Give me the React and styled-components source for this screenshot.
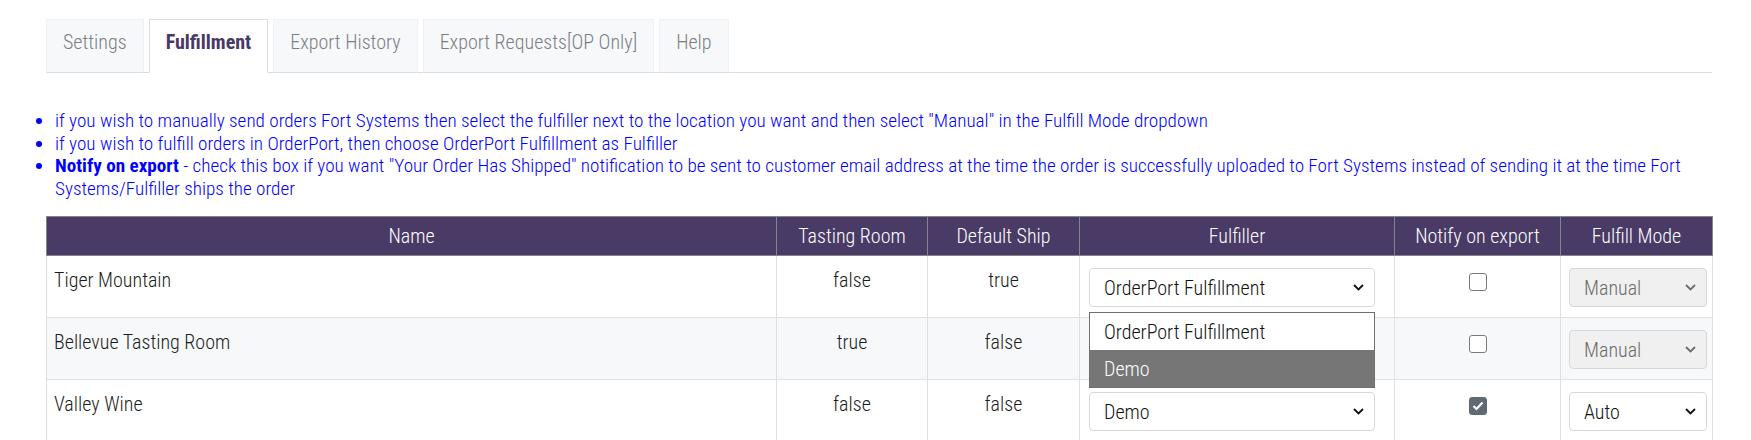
import React from 'react';
import styled, { createGlobalStyle } from 'styled-components';

const GlobalStyle = createGlobalStyle`
  html, body {
    margin: 0;
    overflow: hidden;
    background: #fff;
  }
  body {
    font-family: "Roboto Condensed", Roboto, "Liberation Sans", sans-serif;
    font-weight: 300;
    color: #1c1c1c;
  }
`;

const Page = styled.div`
  padding: 19px 39px 0 46px;
`;

const TabBar = styled.nav`
  display: flex;
  gap: 5px;
  border-bottom: 1px solid #d9dde3;
`;

const Tab = styled.div`
  box-sizing: border-box;
  height: 54px;
  margin-bottom: -1px;
  padding: 0 16px 8px;
  display: flex;
  align-items: center;
  font-size: 20px;
  background: ${(p) => (p.$active ? '#fff' : '#f7f8fa')};
  border: 1px solid ${(p) => (p.$active ? '#d9dde3' : '#eff1f4')};
  border-bottom-color: ${(p) => (p.$active ? '#fff' : '#d9dde3')};
  color: ${(p) => (p.$active ? '#4a3966' : '#7b7e83')};
  font-weight: ${(p) => (p.$active ? 700 : 300)};
`;

const Notes = styled.ul`
  margin: 37px 0 0;
  padding-left: 9px;
  color: #0000ff;
  font-size: 19.15px;
  font-weight: 300;
  line-height: 22.5px;
`;

const Strong = styled.b`
  font-weight: 700;
`;

const Table = styled.table`
  margin-top: 16px;
  width: 100%;
  border-collapse: collapse;
  table-layout: fixed;
  font-size: 20px;
`;

const Th = styled.th`
  height: 38px;
  padding: 0 8px;
  background: #4a3a66;
  color: #fff;
  font-weight: 300;
  border: 1px solid #858585;
  text-align: center;
`;

const Row = styled.tr`
  background: ${(p) => (p.$striped ? '#f7f8fa' : '#fff')};
`;

const Td = styled.td`
  padding: 12px 8px 10px ${(p) => p.$padLeft || 8}px;
  vertical-align: top;
  border: 1px solid #dde1e6;
  line-height: 24px;
  text-align: ${(p) => p.$align || 'center'};
`;

const SelectBox = styled.div`
  position: relative;
  box-sizing: border-box;
  width: ${(p) => p.$width}px;
  height: 39px;
  padding: 0 10px 0 14px;
  display: flex;
  align-items: center;
  justify-content: space-between;
  border: 1px solid #d4d8dd;
  border-radius: 4px;
  background: ${(p) => (p.$disabled ? '#f0f0f0' : '#fff')};
  color: ${(p) => (p.$disabled ? '#6b6b6b' : '#111')};
  text-align: left;
`;

const Menu = styled.div`
  position: absolute;
  z-index: 2;
  top: 43px;
  left: -1px;
  right: -1px;
  border: 1px solid #6f6f6f;
  background: #fff;
`;

const Option = styled.div`
  height: 37px;
  padding-left: 14px;
  display: flex;
  align-items: center;
  background: ${(p) => (p.$selected ? '#767676' : '#fff')};
  color: ${(p) => (p.$selected ? '#fff' : '#111')};
`;

const Check = styled.span`
  box-sizing: border-box;
  width: 18px;
  height: 18px;
  margin: 5px auto 0;
  border-radius: 3px;
  border: 1.5px solid ${(p) => (p.$checked ? '#5f6a72' : '#7a7a7a')};
  background: ${(p) => (p.$checked ? '#5f6a72' : '#fff')};
  display: flex;
  align-items: center;
  justify-content: center;
`;

const Chevron = ({ color }) => (
  <svg width="11" height="7" viewBox="0 0 11 7">
    <polyline points="1,1 5.5,5.5 10,1" fill="none" stroke={color} strokeWidth="1.8" />
  </svg>
);

const CheckMark = () => (
  <svg width="12" height="10" viewBox="0 0 12 10">
    <polyline points="1.5,5 4.5,8 10.5,1.5" fill="none" stroke="#fff" strokeWidth="2.2" />
  </svg>
);

function Select({ value, width, disabled, open, options }) {
  return (
    <SelectBox $width={width} $disabled={disabled}>
      <span>{value}</span>
      <Chevron color={disabled ? '#6b6b6b' : '#111'} />
      {open && (
        <Menu>
          {options.map((o) => (
            <Option key={o} $selected={o === 'Demo'}>
              {o}
            </Option>
          ))}
        </Menu>
      )}
    </SelectBox>
  );
}

const tabs = ['Settings', 'Fulfillment', 'Export History', 'Export Requests[OP Only]', 'Help'];

const columns = [
  { label: 'Name', width: 730 },
  { label: 'Tasting Room', width: 151 },
  { label: 'Default Ship', width: 152 },
  { label: 'Fulfiller', width: 315 },
  { label: 'Notify on export', width: 166 },
  { label: 'Fulfill Mode', width: 152 },
];

const fulfillers = ['OrderPort Fulfillment', 'Demo'];

const locations = [
  { name: 'Tiger Mountain', tasting: 'false', ship: 'true', fulfiller: 'OrderPort Fulfillment', notify: false, mode: 'Manual', manual: true, open: true },
  { name: 'Bellevue Tasting Room', tasting: 'true', ship: 'false', fulfiller: 'OrderPort Fulfillment', notify: false, mode: 'Manual', manual: true },
  { name: 'Valley Wine', tasting: 'false', ship: 'false', fulfiller: 'Demo', notify: true, mode: 'Auto' },
];

export default function App() {
  return (
    <>
      <GlobalStyle />
      <Page>
        <TabBar>
          {tabs.map((t) => (
            <Tab key={t} $active={t === 'Fulfillment'}>
              {t}
            </Tab>
          ))}
        </TabBar>

        <Notes>
          <li>
            if you wish to manually send orders Fort Systems then select the fulfiller next to the location you want and then
            select "Manual" in the Fulfill Mode dropdown
          </li>
          <li>if you wish to fulfill orders in OrderPort, then choose OrderPort Fulfillment as Fulfiller</li>
          <li>
            <Strong>Notify on export</Strong> - check this box if you want "Your Order Has Shipped" notification to be sent to
            customer email address at the time the order is successfully uploaded to Fort Systems instead of sending it at the
            time Fort Systems/Fulfiller ships the order
          </li>
        </Notes>

        <Table>
          <colgroup>
            {columns.map((c) => (
              <col key={c.label} style={{ width: c.width }} />
            ))}
          </colgroup>
          <thead>
            <tr>
              {columns.map((c) => (
                <Th key={c.label}>{c.label}</Th>
              ))}
            </tr>
          </thead>
          <tbody>
            {locations.map((l, i) => (
              <Row key={l.name} $striped={i % 2 === 1}>
                <Td $align="left" $padLeft={7}>{l.name}</Td>
                <Td>{l.tasting}</Td>
                <Td>{l.ship}</Td>
                <Td $align="left" $padLeft={9}>
                  <Select value={l.fulfiller} width={286} open={l.open} options={fulfillers} />
                </Td>
                <Td>
                  <Check $checked={l.notify}>{l.notify && <CheckMark />}</Check>
                </Td>
                <Td $align="left">
                  <Select value={l.mode} width={138} disabled={l.manual} />
                </Td>
              </Row>
            ))}
          </tbody>
        </Table>
      </Page>
    </>
  );
}
